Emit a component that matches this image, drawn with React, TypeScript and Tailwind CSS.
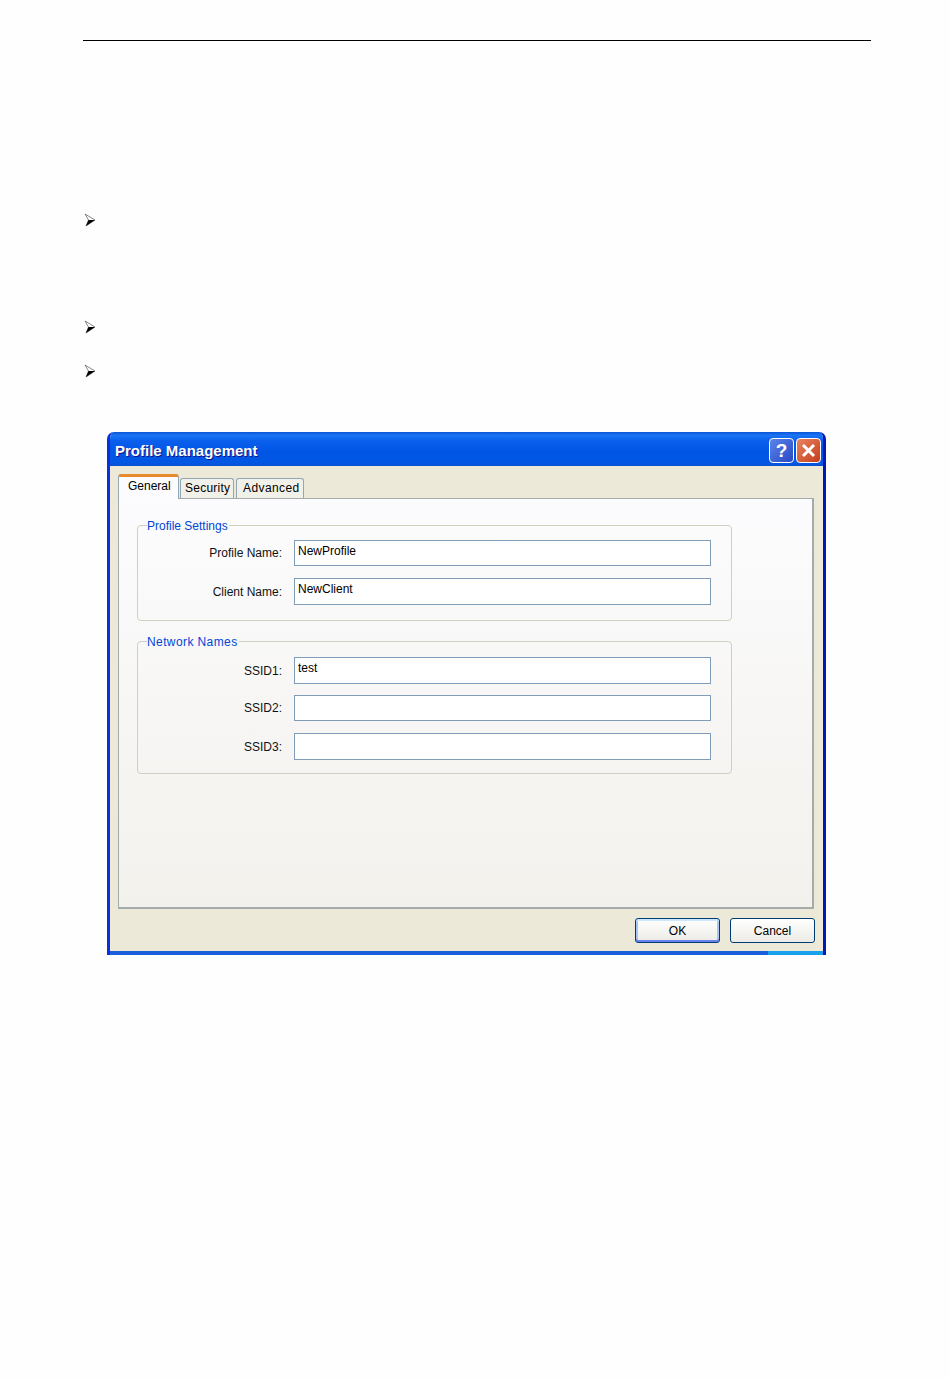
const FONT = "font-['Liberation_Sans',Arial,sans-serif]"

function Bullet({ className }: { className: string }) {
  return (
    <svg width="12" height="14" viewBox="0 0 12 14" className={className}>
      <path d="M1 1 L11 7 L2 13 L4.5 7 Z" fill="#fff" stroke="#555" strokeWidth="0.7" />
      <path d="M4.5 7 L11 7 L2 13 Z" fill="#000" />
    </svg>
  )
}

function Field({ label, value, className }: { label: string; value?: string; className: string }) {
  return (
    <div className={`flex items-center ${className}`}>
      <label className="w-[134px] text-right text-[12px] leading-none text-[#111]">{label}</label>
      <div className="ml-[12px] flex h-full w-[417px] items-center border border-[#7f9db9] bg-white pb-[5px] pl-[3px] text-[12px] text-black">
        {value}
      </div>
    </div>
  )
}

function Group({ title, className, legendClass, children }: { title: string; className: string; legendClass?: string; children: React.ReactNode }) {
  return (
    <fieldset className={`w-[595px] rounded-[4px] border border-[#d0d0bf] pl-[10px] ${className}`}>
      <legend className={`ml-[-1px] translate-y-[1px] pr-[1px] text-[12px] leading-[16px] text-[#0046d5] ${legendClass ?? ''}`}>{title}</legend>
      {children}
    </fieldset>
  )
}

export default function App() {
  return (
    <div className={`h-[1379px] w-[950px] overflow-hidden bg-[#fefefe] ${FONT}`}>
      <div className="ml-[83px] w-[788px] pt-[40px]">
        <div className="h-px bg-black" />

        <div className="flex flex-col">
          <Bullet className="ml-[1px] mt-[172px]" />
          <Bullet className="ml-[1px] mt-[93px]" />
          <Bullet className="ml-[1px] mt-[30px]" />
        </div>

        {/* dialog window */}
        <div className="ml-[24px] mt-[54px] w-[719px] overflow-hidden rounded-t-[7px] border-l-[3px] border-r-[3px] border-l-[#0831d9] border-r-[#0019b5] bg-[#ece9d8]">
          <div className="flex h-[34px] items-end justify-between bg-[linear-gradient(180deg,#0a56d8_0%,#1a74f4_10%,#0a60ec_25%,#0055e5_60%,#0258e4_90%,#0a4fd0_100%)] pb-[3px] pl-[5px] pr-[2px]">
            <span className="mb-px text-[15px] font-bold leading-[22px] text-white [text-shadow:1px_1px_0_#0f1089]">Profile Management</span>
            <div className="flex gap-[2px]">
              <div className="flex h-[25px] w-[25px] items-center justify-center rounded-[4px] border border-white bg-gradient-to-br from-[#5d84ea] to-[#2a47c4] text-[19px] font-bold leading-none text-white">
                ?
              </div>
              <div className="flex h-[25px] w-[25px] items-center justify-center rounded-[4px] border border-white bg-gradient-to-br from-[#e8835f] to-[#c53a15]">
                <svg width="15" height="15" viewBox="0 0 15 15">
                  <path d="M2 2 L13 13 M13 2 L2 13" stroke="#fff" strokeWidth="3" />
                </svg>
              </div>
            </div>
          </div>

          <div className="px-[8px] pb-[8px] pt-[8px]">
            {/* tabs */}
            <div className="relative z-10 flex h-[25px] items-end">
              <div className="h-[25px] w-[61px] rounded-t-[3px] border-x border-[#91a7b4] border-t-[3px] border-t-[#e68b2c] bg-[#fcfcfe] pl-[9px] pt-[1px] text-[12px] leading-[16px] text-black">
                General
              </div>
              <div className="ml-[1px] mb-px h-[20px] w-[54px] rounded-t-[3px] border border-b-0 border-[#91a7b4] bg-[#f2f1e9] pl-[4px] pt-[1px] text-[12px] leading-[16px] tracking-[0.25px] text-black">
                Security
              </div>
              <div className="ml-[2px] mb-px h-[20px] w-[68px] rounded-t-[3px] border border-b-0 border-[#91a7b4] bg-[#f2f1e9] pl-[6px] pt-[1px] text-[12px] leading-[16px] tracking-[0.4px] text-black">
                Advanced
              </div>
            </div>

            {/* tab panel */}
            <div className="mt-[-1px] h-[411px] w-[696px] border border-b-2 border-r-2 border-[#a3abab] bg-gradient-to-b from-[#fcfcfe] to-[#f3f1ec] pl-[18px] pt-[18px]">
              <Group title="Profile Settings" className="h-[104px]">
                <Field label="Profile Name:" value="NewProfile" className="mt-[7px] h-[26px]" />
                <Field label="Client Name:" value="NewClient" className="mt-[12px] h-[27px]" />
              </Group>
              <Group title="Network Names" legendClass="tracking-[0.4px]" className="mt-[12px] h-[141px]">
                <Field label="SSID1:" value="test" className="mt-[8px] h-[27px]" />
                <Field label="SSID2:" className="mt-[11px] h-[26px]" />
                <Field label="SSID3:" className="mt-[12px] h-[27px]" />
              </Group>
            </div>

            {/* dialog buttons */}
            <div className="mt-[9px] flex justify-end gap-[10px]">
              <button className="h-[25px] w-[85px] rounded-[3px] border border-[#003c74] bg-gradient-to-b from-white to-[#ecebe5] text-[12px] text-black shadow-[inset_0_2px_0_#cee7ff,inset_0_-2px_0_#6982ee,inset_2px_0_0_#a8c4f2,inset_-2px_0_0_#a8c4f2]">
                OK
              </button>
              <button className="h-[25px] w-[85px] rounded-[3px] border border-[#003c74] bg-gradient-to-b from-white to-[#ecebe5] text-[12px] text-black">
                Cancel
              </button>
            </div>
          </div>

          {/* bottom edge of the window */}
          <div className="flex h-[4px]">
            <div className="flex-1 bg-[#1c5fdc]" />
            <div className="w-[55px] bg-[#1ba0ee]" />
          </div>
        </div>
      </div>
    </div>
  )
}
